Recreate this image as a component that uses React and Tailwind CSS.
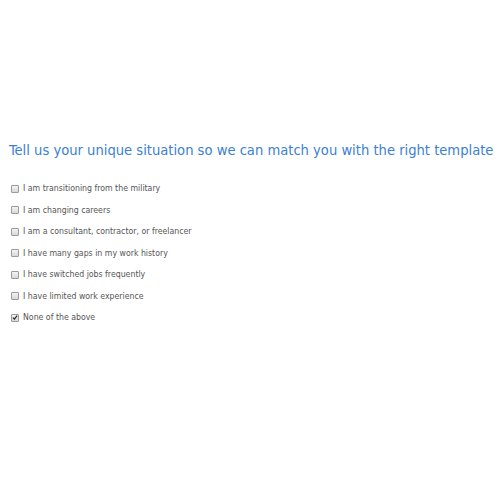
import React from 'react';

const options = [
  { label: 'I am transitioning from the military', checked: false },
  { label: 'I am changing careers', checked: false },
  { label: 'I am a consultant, contractor, or freelancer', checked: false },
  { label: 'I have many gaps in my work history', checked: false },
  { label: 'I have switched jobs frequently', checked: false },
  { label: 'I have limited work experience', checked: false },
  { label: 'None of the above', checked: true },
];

function Box({ checked }) {
  return (
    <span className="w-[8px] h-[8px] border border-[#9a9a9a] rounded-[1px] bg-gradient-to-b from-[#f4f4f4] to-[#d8d8d8] flex items-center justify-center shrink-0">
      {checked && (
        <svg width="7" height="7" viewBox="0 0 8 8">
          <path d="M1.2 4.2 L3.2 6.2 L6.8 1.5" stroke="#222" strokeWidth="1.6" fill="none" />
        </svg>
      )}
    </span>
  );
}

export default function App() {
  return (
    <div className="w-[500px] h-[500px] bg-white pt-[139px] pl-[9px] font-['DejaVu_Sans_Condensed',Tahoma,sans-serif]">
      <h1 className="text-[14.6px] leading-[22px] text-[#3b80d4] whitespace-nowrap">
        Tell us your unique situation so we can match you with the right template
      </h1>
      <div className="mt-[17px] pl-[2px] flex flex-col">
        {options.map((o) => (
          <label key={o.label} className="h-[21.5px] flex items-center gap-[4px] text-[8.7px] text-[#555]">
            <Box checked={o.checked} />
            <span>{o.label}</span>
          </label>
        ))}
      </div>
    </div>
  );
}
